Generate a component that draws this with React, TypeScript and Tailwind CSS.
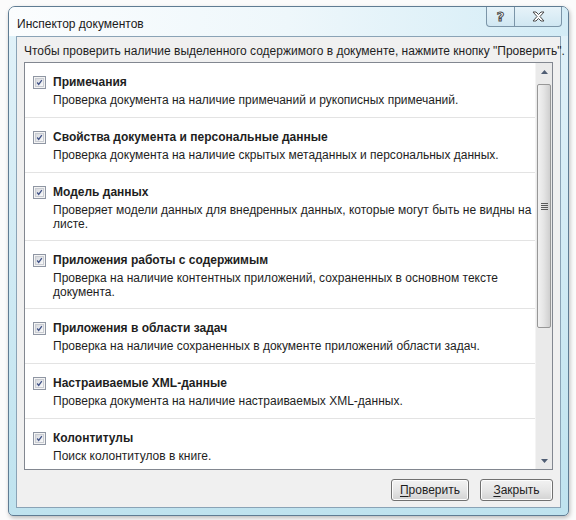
import React from "react";

const items = [
  {
    title: "Примечания",
    desc: ["Проверка документа на наличие примечаний и рукописных примечаний."],
  },
  {
    title: "Свойства документа и персональные данные",
    desc: ["Проверка документа на наличие скрытых метаданных и персональных данных."],
  },
  {
    title: "Модель данных",
    desc: [
      "Проверяет модели данных для внедренных данных, которые могут быть не видны на",
      "листе.",
    ],
  },
  {
    title: "Приложения работы с содержимым",
    desc: [
      "Проверка на наличие контентных приложений, сохраненных в основном тексте",
      "документа.",
    ],
  },
  {
    title: "Приложения в области задач",
    desc: ["Проверка на наличие сохраненных в документе приложений области задач."],
  },
  {
    title: "Настраиваемые XML-данные",
    desc: ["Проверка документа на наличие настраиваемых XML-данных."],
  },
  {
    title: "Колонтитулы",
    desc: ["Поиск колонтитулов в книге."],
  },
];

function CheckBox() {
  return (
    <div className="w-[13px] h-[13px] shrink-0 border border-[#8f96a3] bg-[#f4f4f4] p-[1px]">
      <div className="w-full h-full border border-[#c9ccd2] bg-gradient-to-br from-[#d6d9de] to-[#fafafa] flex items-center justify-center">
        <svg width="9" height="9" viewBox="0 0 9 9">
          <path d="M1.5 4.5 L3.5 7 L7.5 1.5" fill="none" stroke="#3f5186" strokeWidth="1.6" />
        </svg>
      </div>
    </div>
  );
}

function Item({ title, desc, last }: { title: string; desc: string[]; last?: boolean }) {
  const pad = desc.length > 1 ? "pb-[9px]" : "pb-[10px]";
  return (
    <div className={"pl-[8px] pt-[10px] " + pad + (last ? "" : " border-b border-[#e3e3e3]")}>
      <div className="flex items-center h-[18px] gap-[7px]">
        <CheckBox />
        <span className="font-bold text-[#1e1e1e]">{title}</span>
      </div>
      <div className="mt-[2px] pl-[20px] leading-[14px] text-[#1e1e1e] whitespace-nowrap">
        {desc.map((d) => (
          <div key={d}>{d}</div>
        ))}
      </div>
    </div>
  );
}

function ScrollBar() {
  return (
    <div className="w-[17px] shrink-0 flex flex-col bg-[#eaeaea] border-l border-[#f4f4f4]">
      <div className="h-[17px] flex items-center justify-center">
        <svg width="7" height="4" viewBox="0 0 7 4">
          <path d="M0 4 L3.5 0 L7 4 Z" fill="#4f5d73" />
        </svg>
      </div>
      <div className="flex-1 flex flex-col pt-[4px] pb-[124px]">
        <div className="flex-1 mx-[1px] rounded-[2px] border border-[#979797] bg-gradient-to-r from-[#f2f2f2] via-[#e4e4e4] to-[#cfcfcf] flex items-center justify-center">
          <svg width="7" height="8" viewBox="0 0 7 8">
            <path d="M0 1.5 H7 M0 3.5 H7 M0 5.5 H7 M0 7.5 H7" stroke="#5a5a5a" strokeWidth="1" />
          </svg>
        </div>
      </div>
      <div className="h-[17px] flex items-center justify-center">
        <svg width="7" height="4" viewBox="0 0 7 4">
          <path d="M0 0 L3.5 4 L7 0 Z" fill="#4f5d73" />
        </svg>
      </div>
    </div>
  );
}

function Button({ first, rest, w }: { first: string; rest: string; w: string }) {
  return (
    <div
      className={
        w +
        " h-[22px] rounded-[3px] border border-[#707070] bg-gradient-to-b from-[#f2f2f2] via-[#e6e6e6] to-[#d2d2d2] flex items-center justify-center text-[#1e1e1e] shadow-[inset_0_0_0_1px_#fcfcfc]"
      }
    >
      <span>
        <span className="underline underline-offset-2">{first}</span>
        {rest}
      </span>
    </div>
  );
}

export default function App() {
  return (
    <div className="w-[576px] h-[520px] bg-[#fbfbfb] pl-[8px] pt-[6px] font-['Liberation_Sans',sans-serif] text-[12px]">
      <div className="w-[561px] h-[510px] rounded-t-[7px] rounded-b-[5px] border border-[#5f7c93] bg-gradient-to-b from-[#e2f2f9] to-[#bfe3ef] flex flex-col shadow-[1px_2px_4px_rgba(0,0,0,0.25)]">
        <div className="h-[29px] flex items-start justify-between rounded-t-[6px] bg-gradient-to-r from-[#fbfdfe] via-[#eef7fb] to-[#d3ecf6]">
          <div className="pl-[8px] pt-[8px] text-[12px] text-[#1a1a1a]">Инспектор документов</div>
          <div className="flex mr-[6px]">
            <div className="w-[29px] h-[20px] rounded-bl-[4px] border border-t-0 border-[#7b95a8] bg-gradient-to-b from-[#e7f3f9] to-[#d0e7f2] flex items-center justify-center">
              <span className="font-['DejaVu_Sans',sans-serif] font-bold text-[13px] leading-none text-white [-webkit-text-stroke:1px_#4a4a4a]">?</span>
            </div>
            <div className="w-[47px] h-[20px] rounded-br-[4px] border border-t-0 border-l-0 border-[#7b95a8] bg-gradient-to-b from-[#e7f3f9] to-[#d0e7f2] flex items-center justify-center">
              <svg width="13" height="11" viewBox="0 0 13 11">
                <path
                  d="M1 1 H4 L6.5 3.5 L9 1 H12 L8 5.5 L12 10 H9 L6.5 7.5 L4 10 H1 L5 5.5 Z"
                  fill="#ffffff"
                  stroke="#4a4a4a"
                  strokeWidth="1"
                  strokeLinejoin="round"
                />
              </svg>
            </div>
          </div>
        </div>
        <div className="mx-[7px] h-[472px] border border-[#8aa3b6] bg-[#f0f0f0] flex flex-col px-[7px]">
          <div className="pt-[7px] h-[25px] leading-[15px] text-[#1e1e1e] whitespace-nowrap">
            Чтобы проверить наличие выделенного содержимого в документе, нажмите кнопку "Проверить".
          </div>
          <div className="h-[408px] border border-[#828790] bg-white flex">
            <div className="flex-1 overflow-hidden">
              {items.map((it, i) => (
                <Item key={it.title} title={it.title} desc={it.desc} last={i === items.length - 1} />
              ))}
            </div>
            <ScrollBar />
          </div>
          <div className="flex justify-end gap-[11px] mt-[9px]">
            <Button first="П" rest="роверить" w="w-[78px]" />
            <Button first="З" rest="акрыть" w="w-[73px]" />
          </div>
        </div>
      </div>
    </div>
  );
}
